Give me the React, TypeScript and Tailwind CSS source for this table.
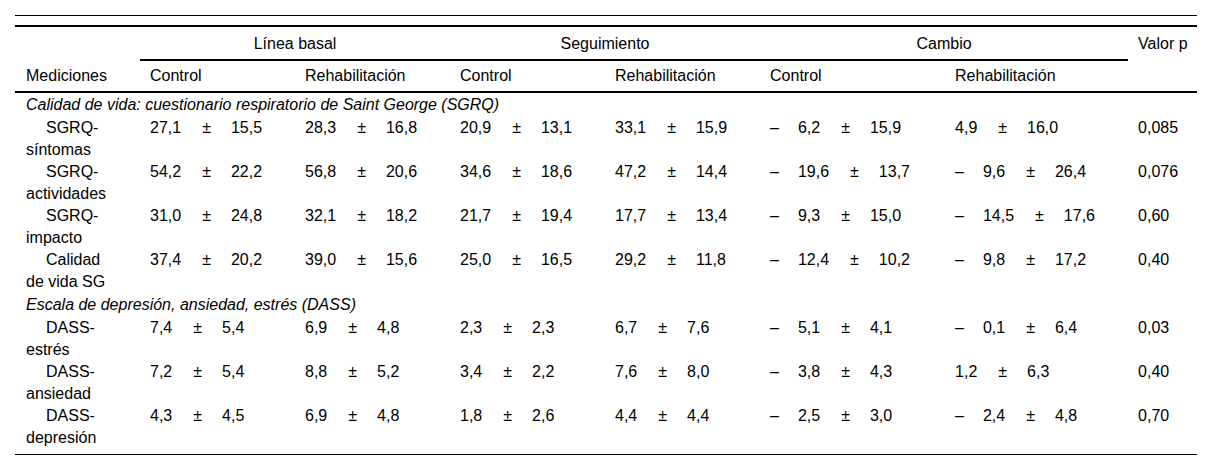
import React from "react";

type Cell = [string, string];

interface Row {
  label: string;
  cells: Cell[];
  p: string;
}

interface Section {
  title: string;
  rows: Row[];
}

const sections: Section[] = [
  {
    title: "Calidad de vida: cuestionario respiratorio de Saint George (SGRQ)",
    rows: [
      {
        label: "SGRQ-síntomas",
        cells: [["27,1", "15,5"], ["28,3", "16,8"], ["20,9", "13,1"], ["33,1", "15,9"], ["–6,2", "15,9"], ["4,9", "16,0"]],
        p: "0,085",
      },
      {
        label: "SGRQ-actividades",
        cells: [["54,2", "22,2"], ["56,8", "20,6"], ["34,6", "18,6"], ["47,2", "14,4"], ["–19,6", "13,7"], ["–9,6", "26,4"]],
        p: "0,076",
      },
      {
        label: "SGRQ-impacto",
        cells: [["31,0", "24,8"], ["32,1", "18,2"], ["21,7", "19,4"], ["17,7", "13,4"], ["–9,3", "15,0"], ["–14,5", "17,6"]],
        p: "0,60",
      },
      {
        label: "Calidad de vida SG",
        cells: [["37,4", "20,2"], ["39,0", "15,6"], ["25,0", "16,5"], ["29,2", "11,8"], ["–12,4", "10,2"], ["–9,8", "17,2"]],
        p: "0,40",
      },
    ],
  },
  {
    title: "Escala de depresión, ansiedad, estrés (DASS)",
    rows: [
      {
        label: "DASS-estrés",
        cells: [["7,4", "5,4"], ["6,9", "4,8"], ["2,3", "2,3"], ["6,7", "7,6"], ["–5,1", "4,1"], ["–0,1", "6,4"]],
        p: "0,03",
      },
      {
        label: "DASS-ansiedad",
        cells: [["7,2", "5,4"], ["8,8", "5,2"], ["3,4", "2,2"], ["7,6", "8,0"], ["–3,8", "4,3"], ["1,2", "6,3"]],
        p: "0,40",
      },
      {
        label: "DASS-depresión",
        cells: [["4,3", "4,5"], ["6,9", "4,8"], ["1,8", "2,6"], ["4,4", "4,4"], ["–2,5", "3,0"], ["–2,4", "4,8"]],
        p: "0,70",
      },
    ],
  },
];

function Value({ v, sd }: { v: string; sd: string }) {
  const neg = v.startsWith("–");
  const num = neg ? v.slice(1) : v;
  return (
    <div className="flex whitespace-nowrap">
      {neg && <span className="mr-[19px]">–</span>}
      <span className="mr-[21px]">{num}</span>
      <span className="mr-[20px]">±</span>
      <span>{sd}</span>
    </div>
  );
}

export default function App() {
  const lastSection = sections.length - 1;

  return (
    <div className="bg-white px-[15px] pt-[15px] pb-[16px] text-[16px] leading-[22px] text-black font-['Liberation_Sans',Arial,sans-serif]">
      <div className="h-px w-[1182px] bg-black" />
      <div className="mt-[9px] h-[2px] w-[1182px] bg-black" />

      <table className="w-[1182px] table-fixed border-separate border-spacing-0">
        <colgroup>
          <col className="w-[125px]" />
          <col className="w-[155px]" />
          <col className="w-[155px]" />
          <col className="w-[155px]" />
          <col className="w-[155px]" />
          <col className="w-[185px]" />
          <col className="w-[183px]" />
          <col className="w-[69px]" />
        </colgroup>
        <thead>
          <tr>
            <th rowSpan={2} className="border-b-2 border-black pl-[11px] pb-[4px] text-left align-bottom font-normal">
              Mediciones
            </th>
            <th colSpan={2} className="border-b-2 border-black pt-[6px] pb-[4px] text-center font-normal">
              Línea basal
            </th>
            <th colSpan={2} className="border-b-2 border-black pt-[6px] pb-[4px] text-center font-normal">
              Seguimiento
            </th>
            <th colSpan={2} className="border-b-2 border-black pt-[6px] pb-[4px] text-center font-normal">
              Cambio
            </th>
            <th rowSpan={2} className="border-b-2 border-black pl-[10px] pt-[6px] text-left align-top font-normal whitespace-nowrap">
              Valor p
            </th>
          </tr>
          <tr>
            {["Control", "Rehabilitación", "Control", "Rehabilitación", "Control", "Rehabilitación"].map((h, i) => (
              <th key={i} className="border-b-2 border-black pl-[10px] pt-[4px] pb-[4px] text-left font-normal">
                {h}
              </th>
            ))}
          </tr>
        </thead>
        <tbody>
          {sections.map((section, si) => (
            <React.Fragment key={section.title}>
              <tr>
                <td colSpan={8} className="pl-[11px] pt-px pb-px italic whitespace-nowrap">
                  {section.title}
                </td>
              </tr>
              {section.rows.map((row, ri) => {
                // last row of the table gets a little room before the closing rule
                const isLast = si === lastSection && ri === section.rows.length - 1;
                const pad = isLast ? "pb-[5px]" : "";
                return (
                  <tr key={row.label}>
                    <td className={`pl-[11px] align-top ${pad}`}>
                      <div className="w-[88px] indent-[20px]">{row.label}</div>
                    </td>
                    {row.cells.map(([v, sd], ci) => (
                      <td key={ci} className={`pl-[10px] align-top ${pad}`}>
                        <Value v={v} sd={sd} />
                      </td>
                    ))}
                    <td className={`pl-[10px] align-top ${pad}`}>{row.p}</td>
                  </tr>
                );
              })}
            </React.Fragment>
          ))}
        </tbody>
      </table>

      <div className="h-px w-[1182px] bg-black" />
    </div>
  );
}
